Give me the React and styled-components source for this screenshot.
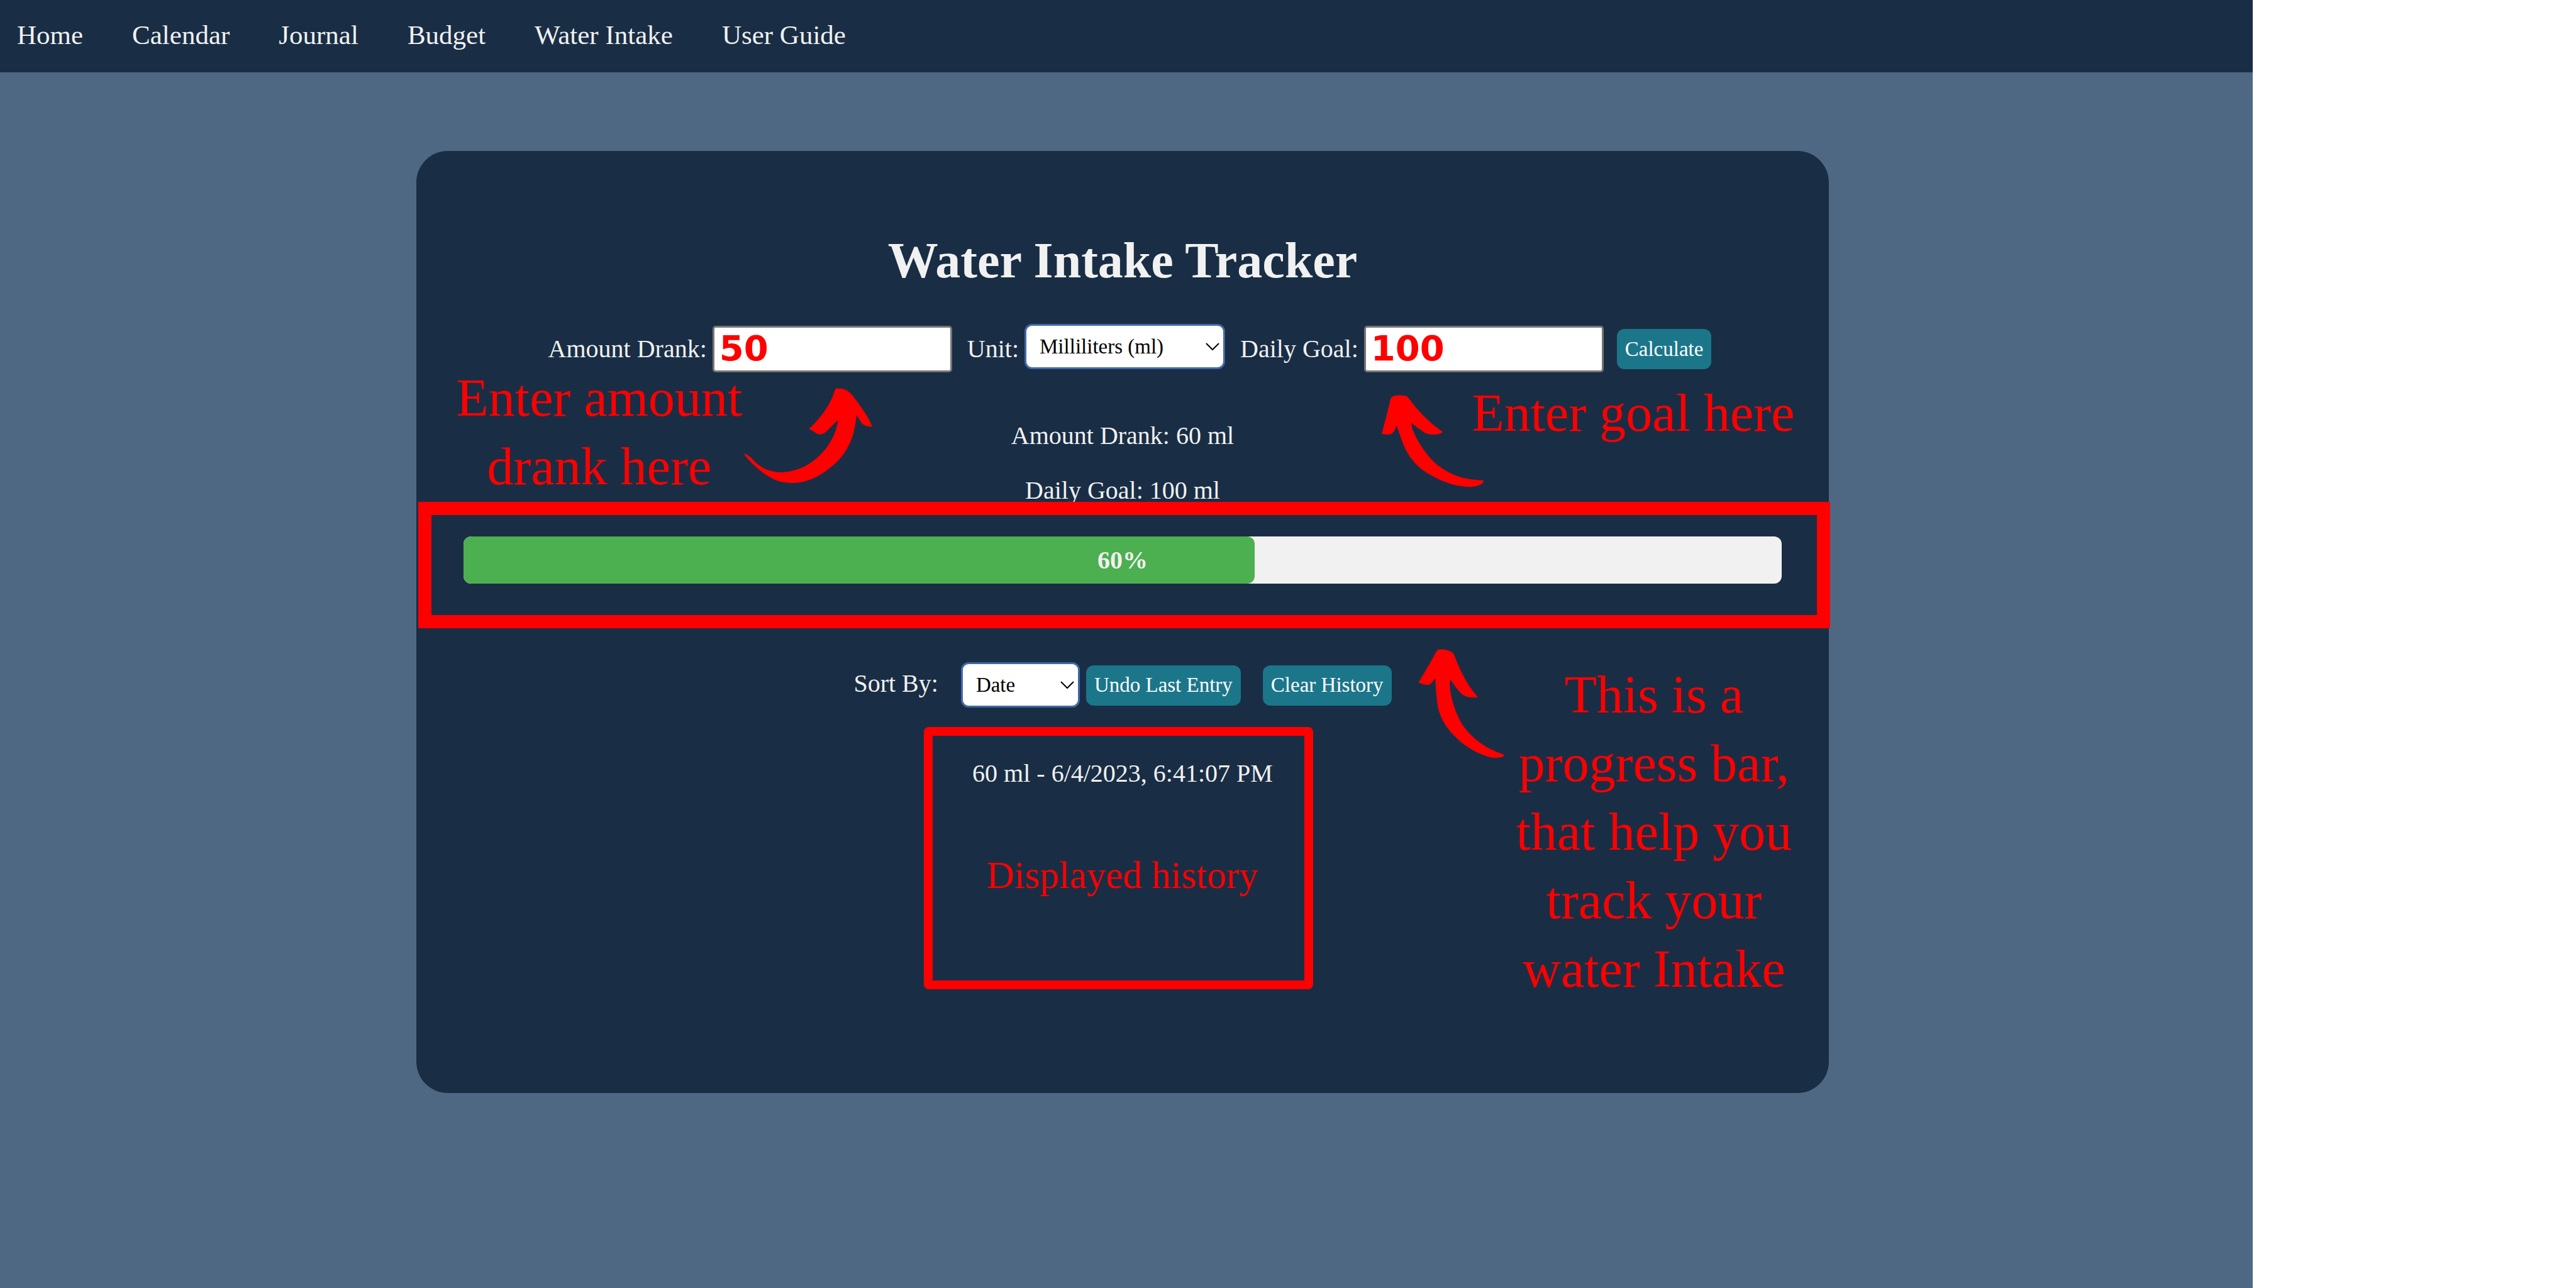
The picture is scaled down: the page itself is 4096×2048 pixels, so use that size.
import React, { useState } from "react";
import styled, { createGlobalStyle } from "styled-components";

const color = {
  navy: "#192e45",
  slate: "#4e6883",
  text: "#f1f1f1",
  teal: "#1b768a",
  green: "#4caf50",
  red: "#ff0000",
};

const GlobalStyle = createGlobalStyle`
  * { box-sizing: border-box; }
  body {
    margin: 0;
    background: #ffffff;
    font-family: "Liberation Serif", "Times New Roman", serif;
  }
`;

const Page = styled.div`
  min-height: 100vh;
  margin-right: 514px;
  background: ${color.slate};
  color: ${color.text};
  font-size: 40px;
  line-height: 46px;
`;

const Nav = styled.nav`
  display: flex;
  align-items: center;
  gap: 78px;
  height: 115px;
  padding: 0 27px 4px;
  background: ${color.navy};
`;

const NavLink = styled.a`
  color: ${color.text};
  font-size: 43px;
  text-decoration: none;
`;

const Main = styled.main`
  padding: 125px 674px 0 662px;
`;

const Card = styled.section`
  position: relative;
  padding: 128px 75px 75px;
  border-radius: 50px;
  background: ${color.navy};
  text-align: center;
`;

const Title = styled.h1`
  margin: 0 0 58px;
  font-size: 80px;
  line-height: 92px;
`;

const EntryForm = styled.form`
  display: flex;
  align-items: center;
  justify-content: center;
  gap: 21px;
  height: 74px;
  padding-left: 23px;
`;

const Fields = styled.div`
  display: flex;
  align-items: center;
  gap: 24px;
`;

const Field = styled.div`
  display: flex;
  align-items: center;
  gap: 9px;
`;

const NumberInput = styled.input`
  width: 381px;
  height: 74px;
  padding: 0 8px 4px;
  border: 3px solid #767676;
  border-radius: 5px;
  background: #ffffff;
  color: ${color.red};
  font-family: "DejaVu Sans", sans-serif;
  font-size: 56px;
  font-weight: 700;
`;

const SelectBox = styled.span`
  position: relative;
  display: inline-flex;
  width: ${(p) => p.$width}px;
  margin-bottom: ${(p) => (p.$raised ? 8 : 0)}px;
`;

const SelectControl = styled.select`
  width: 100%;
  height: 72px;
  padding: 0 21px;
  border: 3px solid #4268a8;
  border-radius: 12px;
  appearance: none;
  background: #ffffff;
  color: #000000;
  font-family: inherit;
  font-size: 33px;
`;

const Chevron = styled.svg`
  position: absolute;
  top: 29px;
  right: 8px;
  width: 24px;
  height: 14px;
  pointer-events: none;
`;

const Button = styled.button`
  height: 64px;
  padding: 0 13px;
  border: 0;
  border-radius: 12px;
  background: ${color.teal};
  color: #ffffff;
  font-family: inherit;
  font-size: 33px;
`;

const Totals = styled.div`
  display: grid;
  gap: 41px;
  margin: 78px 0 50px;
`;

const Line = styled.p`
  margin: 0;
`;

const Track = styled.div`
  display: grid;
  align-items: center;
  height: 75px;
  border-radius: 12px;
  background: #f1f1f1;
  overflow: hidden;

  > * { grid-area: 1 / 1; }
`;

const Fill = styled.div`
  height: 100%;
  border-radius: 12px;
  background: ${color.green};
`;

const Percent = styled.strong`
  color: ${color.text};
`;

const HistoryBar = styled.div`
  display: flex;
  align-items: baseline;
  justify-content: center;
  margin-top: 125px;
`;

const SortField = styled.div`
  display: flex;
  align-items: baseline;
  gap: 36px;
  margin-right: 10px;
`;

const Actions = styled.div`
  display: flex;
  gap: 35px;
`;

const HistoryList = styled.ul`
  min-height: 538px;
  margin: 0;
  padding: 82px 0 0;
  list-style: none;
`;

/* Guide layer: notes, frames and arrows that lie over the card. */
const Note = styled.p`
  position: absolute;
  top: ${(p) => p.$top}px;
  left: ${(p) => (p.$left === undefined ? "auto" : p.$left + "px")};
  right: ${(p) => (p.$right === undefined ? "auto" : p.$right + "px")};
  width: ${(p) => p.$width}px;
  margin: 0;
  color: ${color.red};
  font-size: ${(p) => (p.$small ? 61 : 84)}px;
  line-height: 109px;
  pointer-events: none;
`;

const Frame = styled.div`
  position: absolute;
  border: solid ${color.red};
  pointer-events: none;
`;

const ProgressFrame = styled(Frame)`
  top: 558px;
  left: 3px;
  right: -2px;
  height: 201px;
  border-width: 21px;
`;

const HistoryFrame = styled(Frame)`
  top: 916px;
  left: 807px;
  width: 619px;
  height: 417px;
  border-width: 14px;
  border-radius: 8px;
`;

const Arrow = styled.svg`
  position: absolute;
  top: ${(p) => p.$top}px;
  left: ${(p) => p.$left}px;
  width: ${(p) => p.$size}px;
  height: ${(p) => p.$size}px;
  fill: ${color.red};
  pointer-events: none;
`;

const links = ["Home", "Calendar", "Journal", "Budget", "Water Intake", "User Guide"];

function Select({ id, width, raised, options }) {
  return (
    <SelectBox $width={width} $raised={raised}>
      <SelectControl id={id} defaultValue={options[0]}>
        {options.map((o) => (
          <option key={o}>{o}</option>
        ))}
      </SelectControl>
      <Chevron viewBox="0 0 24 14" aria-hidden="true">
        <path d="M2 2L12 12L22 2" fill="none" stroke="#000" strokeWidth="2" />
      </Chevron>
    </SelectBox>
  );
}

export default function App() {
  const [amount, setAmount] = useState("50");
  const [goal, setGoal] = useState("100");
  const percent = 60;

  return (
    <Page>
      <GlobalStyle />
      <Nav>
        {links.map((l) => (
          <NavLink key={l} href="#">{l}</NavLink>
        ))}
      </Nav>
      <Main>
        <Card>
          <Title>Water Intake Tracker</Title>
          <EntryForm onSubmit={(e) => e.preventDefault()}>
            <Fields>
              <Field>
                <label htmlFor="amount">Amount Drank:</label>
                <NumberInput id="amount" value={amount} onChange={(e) => setAmount(e.target.value)} />
              </Field>
              <Field>
                <label htmlFor="unit">Unit:</label>
                <Select id="unit" width={319} raised options={["Milliliters (ml)"]} />
              </Field>
              <Field>
                <label htmlFor="goal">Daily Goal:</label>
                <NumberInput id="goal" value={goal} onChange={(e) => setGoal(e.target.value)} />
              </Field>
            </Fields>
            <Button type="submit">Calculate</Button>
          </EntryForm>

          <Totals>
            <Line>Amount Drank: 60 ml</Line>
            <Line>Daily Goal: 100 ml</Line>
          </Totals>

          <Track role="progressbar" aria-valuenow={percent} aria-valuemin={0} aria-valuemax={100}>
            <Fill style={{ width: `${percent}%` }} />
            <Percent>{percent}%</Percent>
          </Track>

          <HistoryBar>
            <SortField>
              <label htmlFor="sort">Sort By:</label>
              <Select id="sort" width={189} options={["Date"]} />
            </SortField>
            <Actions>
              <Button type="button">Undo Last Entry</Button>
              <Button type="button">Clear History</Button>
            </Actions>
          </HistoryBar>

          <HistoryList>
            <li>60 ml - 6/4/2023, 6:41:07 PM</li>
          </HistoryList>

          <ProgressFrame />
          <HistoryFrame />

          <Note $top={338} $left={41} $width={500}>Enter amount drank here</Note>
          <Note $top={362} $right={41} $width={540}>Enter goal here</Note>
          <Note $top={810} $right={48} $width={460}>
            This is a progress bar, that help you track your water Intake
          </Note>
          <Note $small $top={1097} $left={843} $width={560}>Displayed history</Note>

          <Arrow $top={347} $left={511} $size={225} viewBox="0 0 1140 1140" aria-hidden="true">
            <path d="M54 687C54 682 59 680 64 683L92 700Q104 708 114 720C175 794 255 831 350 831C570 828 770 640 806 425Q807 412 802 414L720 496Q694 525 664 525Q634 524 612 502Q602 493 585 488Q576 483 581 474C660 405 720 310 744 266Q765 226 780 178Q786 153 802 154C850 154 890 170 919 204L967 268C1010 327 1060 395 1084 465L1042 459Q1012 454 995 428L958 370C953 400 952 430 942 475C924 565 880 665 802 745C690 850 575 917 436 917C285 917 180 830 74 715Q62 703 54 687Z" />
          </Arrow>
          <Arrow $top={359} $left={1525} $size={190} viewBox="0 0 960 960" aria-hidden="true">
            <path d="M50 460C73 370 100 280 119 188Q126 151 174 150Q210 147 243 154Q256 157 272 178C330 260 440 377 535 438Q543 443 533 451Q508 464 462 465Q420 465 389 446C350 421 325 397 290 370C290 395 294 412 304 437C350 550 430 650 492 704C610 797 715 829 867 832Q870 848 860 858Q815 885 762 885C640 885 525 840 412 772C330 720 267 645 229 555C206 500 190 445 170 393C162 408 157 428 147 442Q136 458 120 462Q88 467 50 460Z" />
          </Arrow>
          <Arrow $top={782} $left={1584} $size={190} viewBox="0 0 960 960" aria-hidden="true">
            <path d="M48 320L135 173L190 73Q201 54 220 53Q270 49 319 77Q327 82 334 98C375 205 430 320 491 395L522 432Q526 438 513 440C463 441 425 436 392 409C360 377 335 340 304 296Q299 308 299 335C302 430 345 570 402 661C480 773 600 858 735 898Q734 909 725 916Q705 924 660 925Q632 925 607 916C480 875 375 800 291 698C235 625 205 555 197 465C190 405 186 350 183 288C172 293 160 316 146 328Q133 340 114 339Q80 335 48 320Z" />
          </Arrow>
        </Card>
      </Main>
    </Page>
  );
}
